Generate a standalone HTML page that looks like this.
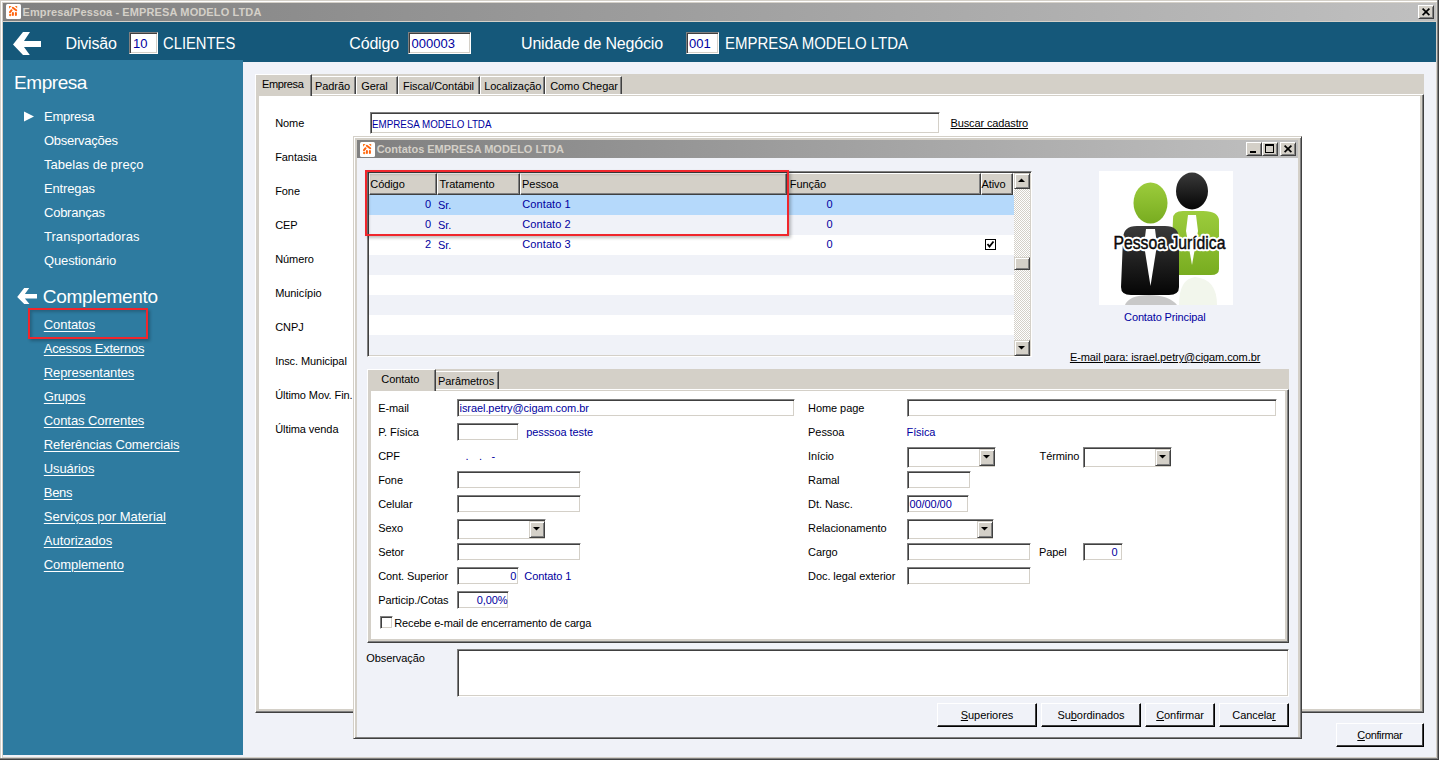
<!DOCTYPE html>
<html><head><meta charset="utf-8"><style>
html,body{margin:0;padding:0;width:1439px;height:760px;overflow:hidden;position:relative;font-family:"Liberation Sans", sans-serif}
body>div,body>svg{position:absolute}
</style></head><body>
<div style="left:0px;top:0px;width:1439px;height:760px;background:#d4d0c8"></div>
<div style="left:1px;top:1px;width:1436px;height:1px;background:#fff"></div>
<div style="left:1px;top:1px;width:1px;height:757px;background:#fff"></div>
<div style="left:1437px;top:0px;width:1px;height:759px;background:#808080"></div>
<div style="left:1438px;top:0px;width:1px;height:760px;background:#404040"></div>
<div style="left:0px;top:758px;width:1438px;height:1px;background:#808080"></div>
<div style="left:0px;top:759px;width:1439px;height:1px;background:#404040"></div>
<div style="left:3px;top:3px;width:1433px;height:18px;background:linear-gradient(to right,#808080,#c0c0c0)"></div>
<svg style="left:6px;top:4px" width="15" height="15"><rect x="0" y="0" width="15" height="15" rx="1.5" fill="#fff"/><g fill="#ff7a20"><path d="M3 2H5.6L3 4.8Z"/><path d="M8.8 2H11.2V4.6Z"/><circle cx="4.2" cy="11" r="1.2"/></g><g stroke="#ff6410" stroke-width="2" stroke-linecap="round"><path d="M6.8 3.8L10.2 6.3M4 8.2L5.6 6.2M6.9 9V11M9.9 9V11"/></g></svg>
<div style="left:22.50px;top:7px;font-size:11px;line-height:11px;color:#d4d0c8;font-weight:700;letter-spacing:0.119px;white-space:pre;">Empresa/Pessoa - EMPRESA MODELO LTDA</div>
<div style="left:1418px;top:5px;width:16px;height:14px;background:#d4d0c8;border-style:solid;border-width:1px;border-color:#fff #404040 #404040 #fff;box-shadow:inset 1px 1px 0 #d4d0c8,inset -1px -1px 0 #808080;box-sizing:border-box"></div>
<svg style="left:1422px;top:8px" width="9" height="8"><path d="M0.6 0.6L7.4 7.2M7.4 0.6L0.6 7.2" stroke="#000" stroke-width="1.7"/></svg>
<div style="left:3px;top:22px;width:1433px;height:40px;background:#15587a"></div>
<svg style="left:13px;top:32px" width="29" height="24"><path d="M10 0H17L11 9H28V15H11L16.8 23H10L0 12.5Z" fill="#fff"/></svg>
<div style="left:65.50px;top:36px;font-size:16px;line-height:16px;color:#fff;font-weight:400;letter-spacing:-0.167px;white-space:pre;">Divisão</div>
<div style="left:129px;top:32px;width:29px;height:22px;background:#fff;border-style:solid;border-width:1px;border-color:#808080 #fff #fff #808080;box-shadow:inset 1px 1px 0 #404040,inset -1px -1px 0 #d4d0c8;box-sizing:border-box"></div>
<div style="left:133.00px;top:37px;font-size:13px;line-height:13px;color:#0000a0;font-weight:400;letter-spacing:0.000px;white-space:pre;">10</div>
<div style="left:163.00px;top:36px;font-size:16px;line-height:16px;color:#fff;font-weight:400;white-space:pre;transform:scaleX(0.9227);transform-origin:0.5px 0;">CLIENTES</div>
<div style="left:349.25px;top:36px;font-size:16px;line-height:16px;color:#fff;font-weight:400;letter-spacing:-0.159px;white-space:pre;">Código</div>
<div style="left:408px;top:32px;width:63px;height:22px;background:#fff;border-style:solid;border-width:1px;border-color:#808080 #fff #fff #808080;box-shadow:inset 1px 1px 0 #404040,inset -1px -1px 0 #d4d0c8;box-sizing:border-box"></div>
<div style="left:411.50px;top:37px;font-size:13px;line-height:13px;color:#0000a0;font-weight:400;letter-spacing:0.000px;white-space:pre;">000003</div>
<div style="left:521.00px;top:36px;font-size:16px;line-height:16px;color:#fff;font-weight:400;letter-spacing:-0.167px;white-space:pre;">Unidade de Negócio</div>
<div style="left:686px;top:32px;width:33px;height:22px;background:#fff;border-style:solid;border-width:1px;border-color:#808080 #fff #fff #808080;box-shadow:inset 1px 1px 0 #404040,inset -1px -1px 0 #d4d0c8;box-sizing:border-box"></div>
<div style="left:689.00px;top:37px;font-size:13px;line-height:13px;color:#0000a0;font-weight:400;letter-spacing:0.000px;white-space:pre;">001</div>
<div style="left:724.50px;top:36px;font-size:16px;line-height:16px;color:#fff;font-weight:400;white-space:pre;transform:scaleX(0.9370);transform-origin:0.5px 0;">EMPRESA MODELO LTDA</div>
<div style="left:3px;top:62px;width:1433px;height:695px;background:#f0f2f8"></div>
<div style="left:3px;top:60px;width:240px;height:695px;background:#2e7ba0"></div>
<div style="left:14.00px;top:73px;font-size:19px;line-height:19px;color:#fff;font-weight:400;letter-spacing:-0.433px;white-space:pre;">Empresa</div>
<svg style="left:24px;top:111px" width="11" height="11"><path d="M0 0.5L10 5.5L0 10.5Z" fill="#fff"/></svg>
<div style="left:44.00px;top:110px;font-size:13px;line-height:13px;color:#fff;font-weight:400;letter-spacing:-0.262px;white-space:pre;">Empresa</div>
<div style="left:44.00px;top:134px;font-size:13px;line-height:13px;color:#fff;font-weight:400;letter-spacing:-0.263px;white-space:pre;">Observações</div>
<div style="left:44.00px;top:158px;font-size:13px;line-height:13px;color:#fff;font-weight:400;letter-spacing:0.030px;white-space:pre;">Tabelas de preço</div>
<div style="left:44.00px;top:182px;font-size:13px;line-height:13px;color:#fff;font-weight:400;letter-spacing:-0.143px;white-space:pre;">Entregas</div>
<div style="left:44.00px;top:206px;font-size:13px;line-height:13px;color:#fff;font-weight:400;letter-spacing:-0.242px;white-space:pre;">Cobranças</div>
<div style="left:44.00px;top:230px;font-size:13px;line-height:13px;color:#fff;font-weight:400;letter-spacing:0.040px;white-space:pre;">Transportadoras</div>
<div style="left:44.00px;top:254px;font-size:13px;line-height:13px;color:#fff;font-weight:400;letter-spacing:-0.127px;white-space:pre;">Questionário</div>
<svg style="left:17px;top:288px" width="21" height="17"><path d="M7.2 0H12.2L7.9 6H20V10.5H7.9L12.4 16H7.2L0.2 9Z" fill="#fff"/></svg>
<div style="left:42.80px;top:287px;font-size:19px;line-height:19px;color:#fff;font-weight:400;letter-spacing:-0.298px;white-space:pre;">Complemento</div>
<div style="left:43.80px;top:318px;font-size:13px;line-height:13px;color:#fff;font-weight:400;letter-spacing:-0.081px;white-space:pre;text-decoration:underline;text-underline-offset:2px">Contatos</div>
<div style="left:43.80px;top:342px;font-size:13px;line-height:13px;color:#fff;font-weight:400;letter-spacing:-0.228px;white-space:pre;text-decoration:underline;text-underline-offset:2px">Acessos Externos</div>
<div style="left:43.80px;top:366px;font-size:13px;line-height:13px;color:#fff;font-weight:400;letter-spacing:-0.099px;white-space:pre;text-decoration:underline;text-underline-offset:2px">Representantes</div>
<div style="left:43.80px;top:390px;font-size:13px;line-height:13px;color:#fff;font-weight:400;letter-spacing:-0.207px;white-space:pre;text-decoration:underline;text-underline-offset:2px">Grupos</div>
<div style="left:43.80px;top:414px;font-size:13px;line-height:13px;color:#fff;font-weight:400;letter-spacing:-0.093px;white-space:pre;text-decoration:underline;text-underline-offset:2px">Contas Correntes</div>
<div style="left:43.80px;top:438px;font-size:13px;line-height:13px;color:#fff;font-weight:400;letter-spacing:-0.109px;white-space:pre;text-decoration:underline;text-underline-offset:2px">Referências Comerciais</div>
<div style="left:43.80px;top:462px;font-size:13px;line-height:13px;color:#fff;font-weight:400;letter-spacing:-0.100px;white-space:pre;text-decoration:underline;text-underline-offset:2px">Usuários</div>
<div style="left:43.80px;top:486px;font-size:13px;line-height:13px;color:#fff;font-weight:400;letter-spacing:-0.310px;white-space:pre;text-decoration:underline;text-underline-offset:2px">Bens</div>
<div style="left:43.80px;top:510px;font-size:13px;line-height:13px;color:#fff;font-weight:400;letter-spacing:-0.000px;white-space:pre;text-decoration:underline;text-underline-offset:2px">Serviços por Material</div>
<div style="left:43.80px;top:534px;font-size:13px;line-height:13px;color:#fff;font-weight:400;letter-spacing:-0.032px;white-space:pre;text-decoration:underline;text-underline-offset:2px">Autorizados</div>
<div style="left:43.80px;top:558px;font-size:13px;line-height:13px;color:#fff;font-weight:400;letter-spacing:-0.085px;white-space:pre;text-decoration:underline;text-underline-offset:2px">Complemento</div>
<div style="left:28px;top:308px;width:120px;height:31px;border:2px solid #f0262c;box-sizing:border-box;box-shadow:2px 2px 3px rgba(0,0,0,.25),inset 2px 2px 3px rgba(0,0,0,.2)"></div>
<div style="left:255px;top:74px;width:1169px;height:20px;background:#d4d0c8"></div>
<div style="left:255px;top:94px;width:1169px;height:619px;background:#d4d0c8;border-style:solid;border-width:1px;border-color:#fff #404040 #404040 #fff;box-shadow:inset -1px -1px 0 #808080;box-sizing:border-box"></div>
<div style="left:259px;top:96px;width:1161px;height:613px;background:#fff"></div>
<div style="left:312px;top:76px;width:44px;height:18px;background:#d4d0c8;border-top:1px solid #fff;border-right:1px solid #404040;box-shadow:inset -1px 0 0 #808080;box-sizing:border-box"></div>
<div style="left:315.00px;top:81px;font-size:11px;line-height:11px;color:#000;font-weight:400;letter-spacing:-0.080px;white-space:pre;">Padrão</div>
<div style="left:356px;top:76px;width:42px;height:18px;background:#d4d0c8;border-top:1px solid #fff;border-left:1px solid #fff;border-right:1px solid #404040;box-shadow:inset -1px 0 0 #808080;box-sizing:border-box"></div>
<div style="left:361.20px;top:81px;font-size:11px;line-height:11px;color:#000;font-weight:400;letter-spacing:-0.080px;white-space:pre;">Geral</div>
<div style="left:398px;top:76px;width:82px;height:18px;background:#d4d0c8;border-top:1px solid #fff;border-left:1px solid #fff;border-right:1px solid #404040;box-shadow:inset -1px 0 0 #808080;box-sizing:border-box"></div>
<div style="left:403.00px;top:81px;font-size:11px;line-height:11px;color:#000;font-weight:400;letter-spacing:-0.080px;white-space:pre;">Fiscal/Contábil</div>
<div style="left:480px;top:76px;width:65px;height:18px;background:#d4d0c8;border-top:1px solid #fff;border-left:1px solid #fff;border-right:1px solid #404040;box-shadow:inset -1px 0 0 #808080;box-sizing:border-box"></div>
<div style="left:484.20px;top:81px;font-size:11px;line-height:11px;color:#000;font-weight:400;letter-spacing:-0.080px;white-space:pre;">Localização</div>
<div style="left:545px;top:76px;width:77px;height:18px;background:#d4d0c8;border-top:1px solid #fff;border-left:1px solid #fff;border-right:1px solid #404040;box-shadow:inset -1px 0 0 #808080;box-sizing:border-box"></div>
<div style="left:550.20px;top:81px;font-size:11px;line-height:11px;color:#000;font-weight:400;letter-spacing:-0.080px;white-space:pre;">Como Chegar</div>
<div style="left:255px;top:74px;width:57px;height:22px;background:#d4d0c8;border-top:1px solid #fff;border-left:1px solid #fff;border-right:1px solid #404040;box-shadow:inset -1px 0 0 #808080;box-sizing:border-box"></div>
<div style="left:262.00px;top:79px;font-size:11px;line-height:11px;color:#000;font-weight:400;letter-spacing:-0.362px;white-space:pre;">Empresa</div>
<div style="left:275.20px;top:118px;font-size:11px;line-height:11px;color:#000;font-weight:400;letter-spacing:-0.080px;white-space:pre;">Nome</div>
<div style="left:275.20px;top:152px;font-size:11px;line-height:11px;color:#000;font-weight:400;letter-spacing:-0.080px;white-space:pre;">Fantasia</div>
<div style="left:275.20px;top:186px;font-size:11px;line-height:11px;color:#000;font-weight:400;letter-spacing:-0.080px;white-space:pre;">Fone</div>
<div style="left:275.20px;top:220px;font-size:11px;line-height:11px;color:#000;font-weight:400;letter-spacing:-0.080px;white-space:pre;">CEP</div>
<div style="left:275.20px;top:254px;font-size:11px;line-height:11px;color:#000;font-weight:400;letter-spacing:-0.080px;white-space:pre;">Número</div>
<div style="left:275.20px;top:288px;font-size:11px;line-height:11px;color:#000;font-weight:400;letter-spacing:-0.080px;white-space:pre;">Município</div>
<div style="left:275.20px;top:322px;font-size:11px;line-height:11px;color:#000;font-weight:400;letter-spacing:-0.080px;white-space:pre;">CNPJ</div>
<div style="left:275.20px;top:356px;font-size:11px;line-height:11px;color:#000;font-weight:400;letter-spacing:-0.080px;white-space:pre;">Insc. Municipal</div>
<div style="left:275.20px;top:390px;font-size:11px;line-height:11px;color:#000;font-weight:400;letter-spacing:-0.080px;white-space:pre;">Último Mov. Fin.</div>
<div style="left:275.20px;top:424px;font-size:11px;line-height:11px;color:#000;font-weight:400;letter-spacing:-0.080px;white-space:pre;">Última venda</div>
<div style="left:370px;top:112px;width:570px;height:22px;background:#fff;border-style:solid;border-width:1px;border-color:#808080 #fff #fff #808080;box-shadow:inset 1px 1px 0 #404040,inset -1px -1px 0 #d4d0c8;box-sizing:border-box"></div>
<div style="left:372.00px;top:119px;font-size:11px;line-height:11px;color:#0000a0;font-weight:400;white-space:pre;transform:scaleX(0.8892);transform-origin:0.5px 0;">EMPRESA MODELO LTDA</div>
<div style="left:950.50px;top:118px;font-size:11px;line-height:11px;color:#000;font-weight:400;letter-spacing:-0.126px;white-space:pre;text-decoration:underline;text-underline-offset:1px">Buscar cadastro</div>
<div style="left:1336px;top:723px;width:88px;height:24px;background:#f0f2f8;border-style:solid;border-width:1px;border-color:#fff #000 #000 #fff;box-shadow:inset -1px -1px 0 #404040;box-sizing:border-box"></div>
<div style="left:1357.30px;top:730px;font-size:11px;line-height:11px;color:#000;font-weight:400;letter-spacing:-0.366px;white-space:pre;"><u>C</u>onfirmar</div>
<div style="left:353px;top:136px;width:949px;height:603px;background:#d4d0c8;border-style:solid;border-width:1px;border-color:#d4d0c8 #404040 #404040 #d4d0c8;box-shadow:inset 1px 1px 0 #fff,inset -1px -1px 0 #808080;box-sizing:border-box"></div>
<div style="left:357px;top:140px;width:941px;height:18px;background:linear-gradient(to right,#808080,#c0c0c0)"></div>
<svg style="left:360px;top:142px" width="15" height="15"><rect x="0" y="0" width="15" height="15" rx="1.5" fill="#fff"/><g fill="#ff7a20"><path d="M3 2H5.6L3 4.8Z"/><path d="M8.8 2H11.2V4.6Z"/><circle cx="4.2" cy="11" r="1.2"/></g><g stroke="#ff6410" stroke-width="2" stroke-linecap="round"><path d="M6.8 3.8L10.2 6.3M4 8.2L5.6 6.2M6.9 9V11M9.9 9V11"/></g></svg>
<div style="left:376.70px;top:144px;font-size:11px;line-height:11px;color:#d4d0c8;font-weight:700;letter-spacing:-0.015px;white-space:pre;">Contatos EMPRESA MODELO LTDA</div>
<div style="left:1246px;top:142px;width:16px;height:14px;background:#d4d0c8;border-style:solid;border-width:1px;border-color:#fff #404040 #404040 #fff;box-shadow:inset 1px 1px 0 #d4d0c8,inset -1px -1px 0 #808080;box-sizing:border-box"></div>
<div style="left:1262px;top:142px;width:16px;height:14px;background:#d4d0c8;border-style:solid;border-width:1px;border-color:#fff #404040 #404040 #fff;box-shadow:inset 1px 1px 0 #d4d0c8,inset -1px -1px 0 #808080;box-sizing:border-box"></div>
<div style="left:1280px;top:142px;width:16px;height:14px;background:#d4d0c8;border-style:solid;border-width:1px;border-color:#fff #404040 #404040 #fff;box-shadow:inset 1px 1px 0 #d4d0c8,inset -1px -1px 0 #808080;box-sizing:border-box"></div>
<div style="left:1250px;top:151px;width:6px;height:2px;background:#000"></div>
<div style="left:1265px;top:144px;width:9px;height:9px;border:1px solid #000;border-top-width:2px;box-sizing:border-box"></div>
<svg style="left:1284px;top:145px" width="9" height="8"><path d="M0.6 0.6L7.4 7.2M7.4 0.6L0.6 7.2" stroke="#000" stroke-width="1.7"/></svg>
<div style="left:357px;top:158px;width:941px;height:579px;background:#f0f2f8"></div>
<div style="left:367px;top:171px;width:665px;height:186px;background:#fff;border-style:solid;border-width:1px;border-color:#808080 #fff #fff #808080;box-shadow:inset 1px 1px 0 #404040,inset -1px -1px 0 #d4d0c8;box-sizing:border-box"></div>
<div style="left:369px;top:195px;width:645px;height:20px;background:#b5d9fb"></div>
<div style="left:369px;top:215px;width:645px;height:20px;background:#f0f2f8"></div>
<div style="left:369px;top:235px;width:645px;height:20px;background:#fff"></div>
<div style="left:369px;top:255px;width:645px;height:20px;background:#f0f2f8"></div>
<div style="left:369px;top:275px;width:645px;height:20px;background:#fff"></div>
<div style="left:369px;top:295px;width:645px;height:20px;background:#f0f2f8"></div>
<div style="left:369px;top:315px;width:645px;height:20px;background:#fff"></div>
<div style="left:369px;top:335px;width:645px;height:20px;background:#f0f2f8"></div>
<div style="left:369px;top:173px;width:68px;height:22px;background:#d4d0c8;border-style:solid;border-width:1px;border-color:#fff #404040 #404040 #fff;box-shadow:inset -1px -1px 0 #808080;box-sizing:border-box"></div>
<div style="left:370.30px;top:179px;font-size:11px;line-height:11px;color:#000;font-weight:400;letter-spacing:-0.080px;white-space:pre;">Código</div>
<div style="left:437px;top:173px;width:83px;height:22px;background:#d4d0c8;border-style:solid;border-width:1px;border-color:#fff #404040 #404040 #fff;box-shadow:inset -1px -1px 0 #808080;box-sizing:border-box"></div>
<div style="left:439.40px;top:179px;font-size:11px;line-height:11px;color:#000;font-weight:400;letter-spacing:-0.080px;white-space:pre;">Tratamento</div>
<div style="left:520px;top:173px;width:267px;height:22px;background:#d4d0c8;border-style:solid;border-width:1px;border-color:#fff #404040 #404040 #fff;box-shadow:inset -1px -1px 0 #808080;box-sizing:border-box"></div>
<div style="left:522.10px;top:179px;font-size:11px;line-height:11px;color:#000;font-weight:400;letter-spacing:-0.080px;white-space:pre;">Pessoa</div>
<div style="left:787px;top:173px;width:194px;height:22px;background:#d4d0c8;border-style:solid;border-width:1px;border-color:#fff #404040 #404040 #fff;box-shadow:inset -1px -1px 0 #808080;box-sizing:border-box"></div>
<div style="left:789.80px;top:179px;font-size:11px;line-height:11px;color:#000;font-weight:400;letter-spacing:-0.080px;white-space:pre;">Função</div>
<div style="left:981px;top:173px;width:32px;height:22px;background:#d4d0c8;border-style:solid;border-width:1px;border-color:#fff #404040 #404040 #fff;box-shadow:inset -1px -1px 0 #808080;box-sizing:border-box"></div>
<div style="left:981.50px;top:179px;font-size:11px;line-height:11px;color:#000;font-weight:400;letter-spacing:-0.080px;white-space:pre;">Ativo</div>
<div style="left:424.95px;top:199px;font-size:11px;line-height:11px;color:#0000a0;font-weight:400;letter-spacing:-0.080px;white-space:pre;">0</div>
<div style="left:438.00px;top:200px;font-size:11px;line-height:11px;color:#0000a0;font-weight:400;letter-spacing:-0.080px;white-space:pre;">Sr.</div>
<div style="left:522.30px;top:199px;font-size:11px;line-height:11px;color:#0000a0;font-weight:400;letter-spacing:0.089px;white-space:pre;">Contato 1</div>
<div style="left:826.50px;top:199px;font-size:11px;line-height:11px;color:#0000a0;font-weight:400;letter-spacing:-0.080px;white-space:pre;">0</div>
<div style="left:424.95px;top:219px;font-size:11px;line-height:11px;color:#0000a0;font-weight:400;letter-spacing:-0.080px;white-space:pre;">0</div>
<div style="left:438.00px;top:220px;font-size:11px;line-height:11px;color:#0000a0;font-weight:400;letter-spacing:-0.080px;white-space:pre;">Sr.</div>
<div style="left:522.30px;top:219px;font-size:11px;line-height:11px;color:#0000a0;font-weight:400;letter-spacing:0.089px;white-space:pre;">Contato 2</div>
<div style="left:826.50px;top:219px;font-size:11px;line-height:11px;color:#0000a0;font-weight:400;letter-spacing:-0.080px;white-space:pre;">0</div>
<div style="left:424.95px;top:239px;font-size:11px;line-height:11px;color:#0000a0;font-weight:400;letter-spacing:-0.080px;white-space:pre;">2</div>
<div style="left:438.00px;top:240px;font-size:11px;line-height:11px;color:#0000a0;font-weight:400;letter-spacing:-0.080px;white-space:pre;">Sr.</div>
<div style="left:522.30px;top:239px;font-size:11px;line-height:11px;color:#0000a0;font-weight:400;letter-spacing:0.089px;white-space:pre;">Contato 3</div>
<div style="left:826.50px;top:239px;font-size:11px;line-height:11px;color:#0000a0;font-weight:400;letter-spacing:-0.080px;white-space:pre;">0</div>
<svg style="left:985px;top:239px" width="11" height="11"><rect x="0.5" y="0.5" width="10" height="10" fill="#fff" stroke="#000"/><path d="M2.5 5L4.5 7.5L8.5 2.5" stroke="#000" stroke-width="1.8" fill="none"/></svg>
<div style="left:1014px;top:173px;width:16px;height:183px;background:repeating-conic-gradient(#d4d0c8 0 25%,#fff 0 50%) 0 0/2px 2px"></div>
<div style="left:1014px;top:173px;width:16px;height:16px;background:#d4d0c8;border-style:solid;border-width:1px;border-color:#d4d0c8 #404040 #404040 #d4d0c8;box-shadow:inset 1px 1px 0 #fff,inset -1px -1px 0 #808080;box-sizing:border-box"></div>
<svg style="left:1018px;top:178px" width="8" height="5"><path d="M0 4H7L3.5 0.5Z" fill="#000"/></svg>
<div style="left:1014px;top:257px;width:16px;height:13px;background:#d4d0c8;border-style:solid;border-width:1px;border-color:#d4d0c8 #404040 #404040 #d4d0c8;box-shadow:inset 1px 1px 0 #fff,inset -1px -1px 0 #808080;box-sizing:border-box"></div>
<div style="left:1014px;top:340px;width:16px;height:16px;background:#d4d0c8;border-style:solid;border-width:1px;border-color:#d4d0c8 #404040 #404040 #d4d0c8;box-shadow:inset 1px 1px 0 #fff,inset -1px -1px 0 #808080;box-sizing:border-box"></div>
<svg style="left:1018px;top:346px" width="8" height="5"><path d="M0 0H7L3.5 3.5Z" fill="#000"/></svg>
<div style="left:365px;top:170px;width:424px;height:66px;border:2px solid #f0262c;box-sizing:border-box;box-shadow:2px 2px 3px rgba(0,0,0,.25),inset 2px 2px 3px rgba(0,0,0,.2)"></div>
<svg style="left:1099px;top:171px" width="134" height="134" viewBox="0 0 134 134">
<rect width="134" height="134" fill="#fff"/>
<defs><linearGradient id="gr" x1="0" y1="0" x2="0" y2="1"><stop offset="0" stop-color="#9ccc3c"/><stop offset="1" stop-color="#78ac20"/></linearGradient>
<linearGradient id="bk" x1="0" y1="0" x2="0" y2="1"><stop offset="0" stop-color="#3a3a3a"/><stop offset="1" stop-color="#050505"/></linearGradient></defs>
<ellipse cx="93" cy="20" rx="16" ry="18.5" fill="url(#bk)"/>
<path d="M74 48Q74 40 84 40H104Q120 40 120 50V98Q120 104 112 104H80Q72 104 72 96Z" fill="url(#gr)"/>
<path d="M89 44H97L99 60L93 94L87 60Z" fill="#fff"/>
<ellipse cx="51.5" cy="32" rx="17" ry="20.5" fill="url(#gr)"/>
<path d="M24 68Q24 55 38 55H66Q80 55 80 68V116Q80 124 70 124H32Q22 124 22 116Z" fill="url(#bk)"/>
<path d="M47 58H56L58 74L51.5 115L45 74Z" fill="#fff"/>
<path d="M26 134Q30 124 50 124Q70 124 78 134Z" fill="#c8c8c8"/>
<path d="M80 134Q80 108 96 106Q118 108 118 134Z" fill="#f2f6ec"/>
<text x="14.5" y="77.5" font-family="Liberation Sans" font-weight="400" font-size="17.5" fill="none" stroke="#fff" stroke-width="4.5" stroke-linejoin="round" textLength="112" lengthAdjust="spacingAndGlyphs">Pessoa Jurídica</text><text x="14.5" y="77.5" font-family="Liberation Sans" font-weight="400" font-size="17.5" fill="#0a0a0a" stroke="#0a0a0a" stroke-width="0.45" textLength="112" lengthAdjust="spacingAndGlyphs">Pessoa Jurídica</text>
</svg>
<div style="left:1124.10px;top:312px;font-size:11px;line-height:11px;color:#0000a0;font-weight:400;letter-spacing:-0.140px;white-space:pre;">Contato Principal</div>
<div style="left:1069.90px;top:352px;font-size:11px;line-height:11px;color:#000;font-weight:400;letter-spacing:-0.077px;white-space:pre;text-decoration:underline;text-underline-offset:1px">E-mail para: israel.petry@cigam.com.br</div>
<div style="left:367px;top:369px;width:922px;height:20px;background:#d4d0c8"></div>
<div style="left:367px;top:389px;width:922px;height:254px;background:#d4d0c8;border-style:solid;border-width:1px;border-color:#fff #404040 #404040 #fff;box-shadow:inset -1px -1px 0 #808080;box-sizing:border-box"></div>
<div style="left:371px;top:391px;width:914px;height:248px;background:#fff"></div>
<div style="left:436px;top:371px;width:63px;height:18px;background:#d4d0c8;border-top:1px solid #fff;border-right:1px solid #404040;box-shadow:inset -1px 0 0 #808080;box-sizing:border-box"></div>
<div style="left:438.00px;top:376px;font-size:11px;line-height:11px;color:#000;font-weight:400;letter-spacing:-0.080px;white-space:pre;">Parâmetros</div>
<div style="left:367px;top:369px;width:69px;height:22px;background:#d4d0c8;border-top:1px solid #fff;border-left:1px solid #fff;border-right:1px solid #404040;box-shadow:inset -1px 0 0 #808080;box-sizing:border-box"></div>
<div style="left:381.30px;top:374px;font-size:11px;line-height:11px;color:#000;font-weight:400;letter-spacing:-0.080px;white-space:pre;">Contato</div>
<div style="left:378.20px;top:403px;font-size:11px;line-height:11px;color:#000;font-weight:400;letter-spacing:-0.080px;white-space:pre;">E-mail</div>
<div style="left:378.20px;top:427px;font-size:11px;line-height:11px;color:#000;font-weight:400;letter-spacing:-0.080px;white-space:pre;">P. Física</div>
<div style="left:378.20px;top:451px;font-size:11px;line-height:11px;color:#000;font-weight:400;letter-spacing:-0.080px;white-space:pre;">CPF</div>
<div style="left:378.20px;top:475px;font-size:11px;line-height:11px;color:#000;font-weight:400;letter-spacing:-0.080px;white-space:pre;">Fone</div>
<div style="left:378.20px;top:499px;font-size:11px;line-height:11px;color:#000;font-weight:400;letter-spacing:-0.080px;white-space:pre;">Celular</div>
<div style="left:378.20px;top:523px;font-size:11px;line-height:11px;color:#000;font-weight:400;letter-spacing:-0.080px;white-space:pre;">Sexo</div>
<div style="left:378.20px;top:547px;font-size:11px;line-height:11px;color:#000;font-weight:400;letter-spacing:-0.080px;white-space:pre;">Setor</div>
<div style="left:378.20px;top:571px;font-size:11px;line-height:11px;color:#000;font-weight:400;letter-spacing:-0.080px;white-space:pre;">Cont. Superior</div>
<div style="left:378.20px;top:595px;font-size:11px;line-height:11px;color:#000;font-weight:400;letter-spacing:-0.080px;white-space:pre;">Particip./Cotas</div>
<div style="left:457px;top:399px;width:338px;height:18px;background:#fff;border-style:solid;border-width:1px;border-color:#808080 #fff #fff #808080;box-shadow:inset 1px 1px 0 #404040,inset -1px -1px 0 #d4d0c8;box-sizing:border-box"></div>
<div style="left:459.50px;top:403px;font-size:11px;line-height:11px;color:#0000a0;font-weight:400;letter-spacing:-0.067px;white-space:pre;">israel.petry@cigam.com.br</div>
<div style="left:457px;top:423px;width:62px;height:18px;background:#fff;border-style:solid;border-width:1px;border-color:#808080 #fff #fff #808080;box-shadow:inset 1px 1px 0 #404040,inset -1px -1px 0 #d4d0c8;box-sizing:border-box"></div>
<div style="left:526.20px;top:427px;font-size:11px;line-height:11px;color:#0000a0;font-weight:400;letter-spacing:-0.083px;white-space:pre;">pesssoa teste</div>
<div style="left:465.50px;top:451px;font-size:11px;line-height:11px;color:#0000a0;font-weight:400;letter-spacing:-0.080px;white-space:pre;">.</div>
<div style="left:479.00px;top:451px;font-size:11px;line-height:11px;color:#0000a0;font-weight:400;letter-spacing:-0.080px;white-space:pre;">.</div>
<div style="left:491.50px;top:451px;font-size:11px;line-height:11px;color:#0000a0;font-weight:400;letter-spacing:-0.080px;white-space:pre;">-</div>
<div style="left:457px;top:471px;width:124px;height:18px;background:#fff;border-style:solid;border-width:1px;border-color:#808080 #fff #fff #808080;box-shadow:inset 1px 1px 0 #404040,inset -1px -1px 0 #d4d0c8;box-sizing:border-box"></div>
<div style="left:457px;top:495px;width:124px;height:18px;background:#fff;border-style:solid;border-width:1px;border-color:#808080 #fff #fff #808080;box-shadow:inset 1px 1px 0 #404040,inset -1px -1px 0 #d4d0c8;box-sizing:border-box"></div>
<div style="left:457px;top:519px;width:89px;height:21px;background:#fff;border-style:solid;border-width:1px;border-color:#808080 #fff #fff #808080;box-shadow:inset 1px 1px 0 #404040,inset -1px -1px 0 #d4d0c8;box-sizing:border-box"></div>
<div style="left:529px;top:521px;width:16px;height:17px;background:#d4d0c8;border-style:solid;border-width:1px;border-color:#d4d0c8 #404040 #404040 #d4d0c8;box-shadow:inset 1px 1px 0 #fff,inset -1px -1px 0 #808080;box-sizing:border-box"></div>
<svg style="left:533px;top:527px" width="8" height="5"><path d="M0 0H7L3.5 3.5Z" fill="#000"/></svg>
<div style="left:457px;top:543px;width:124px;height:18px;background:#fff;border-style:solid;border-width:1px;border-color:#808080 #fff #fff #808080;box-shadow:inset 1px 1px 0 #404040,inset -1px -1px 0 #d4d0c8;box-sizing:border-box"></div>
<div style="left:457px;top:567px;width:62px;height:18px;background:#fff;border-style:solid;border-width:1px;border-color:#808080 #fff #fff #808080;box-shadow:inset 1px 1px 0 #404040,inset -1px -1px 0 #d4d0c8;box-sizing:border-box"></div>
<div style="left:510.16px;top:571px;font-size:11px;line-height:11px;color:#0000a0;font-weight:400;letter-spacing:-0.080px;white-space:pre;">0</div>
<div style="left:524.30px;top:571px;font-size:11px;line-height:11px;color:#0000a0;font-weight:400;letter-spacing:-0.080px;white-space:pre;">Contato 1</div>
<div style="left:457px;top:591px;width:52px;height:18px;background:#fff;border-style:solid;border-width:1px;border-color:#808080 #fff #fff #808080;box-shadow:inset 1px 1px 0 #404040,inset -1px -1px 0 #d4d0c8;box-sizing:border-box"></div>
<div style="left:476.70px;top:595px;font-size:11px;line-height:11px;color:#0000a0;font-weight:400;letter-spacing:-0.080px;white-space:pre;">0,00%</div>
<div style="left:380px;top:616px;width:13px;height:13px;background:#fff;border-style:solid;border-width:1px;border-color:#808080 #fff #fff #808080;box-shadow:inset 1px 1px 0 #404040,inset -1px -1px 0 #d4d0c8;box-sizing:border-box"></div>
<div style="left:394.30px;top:618px;font-size:11px;line-height:11px;color:#000;font-weight:400;letter-spacing:-0.158px;white-space:pre;">Recebe e-mail de encerramento de carga</div>
<div style="left:808.10px;top:403px;font-size:11px;line-height:11px;color:#000;font-weight:400;letter-spacing:-0.080px;white-space:pre;">Home page</div>
<div style="left:808.10px;top:427px;font-size:11px;line-height:11px;color:#000;font-weight:400;letter-spacing:-0.080px;white-space:pre;">Pessoa</div>
<div style="left:808.10px;top:451px;font-size:11px;line-height:11px;color:#000;font-weight:400;letter-spacing:-0.080px;white-space:pre;">Início</div>
<div style="left:808.10px;top:475px;font-size:11px;line-height:11px;color:#000;font-weight:400;letter-spacing:-0.080px;white-space:pre;">Ramal</div>
<div style="left:808.10px;top:499px;font-size:11px;line-height:11px;color:#000;font-weight:400;letter-spacing:-0.080px;white-space:pre;">Dt. Nasc.</div>
<div style="left:808.10px;top:523px;font-size:11px;line-height:11px;color:#000;font-weight:400;letter-spacing:-0.080px;white-space:pre;">Relacionamento</div>
<div style="left:808.10px;top:547px;font-size:11px;line-height:11px;color:#000;font-weight:400;letter-spacing:-0.080px;white-space:pre;">Cargo</div>
<div style="left:808.10px;top:571px;font-size:11px;line-height:11px;color:#000;font-weight:400;letter-spacing:-0.080px;white-space:pre;">Doc. legal exterior</div>
<div style="left:907px;top:399px;width:370px;height:18px;background:#fff;border-style:solid;border-width:1px;border-color:#808080 #fff #fff #808080;box-shadow:inset 1px 1px 0 #404040,inset -1px -1px 0 #d4d0c8;box-sizing:border-box"></div>
<div style="left:906.50px;top:427px;font-size:11px;line-height:11px;color:#0000a0;font-weight:400;letter-spacing:-0.080px;white-space:pre;">Física</div>
<div style="left:907px;top:447px;width:89px;height:21px;background:#fff;border-style:solid;border-width:1px;border-color:#808080 #fff #fff #808080;box-shadow:inset 1px 1px 0 #404040,inset -1px -1px 0 #d4d0c8;box-sizing:border-box"></div>
<div style="left:979px;top:449px;width:16px;height:17px;background:#d4d0c8;border-style:solid;border-width:1px;border-color:#d4d0c8 #404040 #404040 #d4d0c8;box-shadow:inset 1px 1px 0 #fff,inset -1px -1px 0 #808080;box-sizing:border-box"></div>
<svg style="left:983px;top:455px" width="8" height="5"><path d="M0 0H7L3.5 3.5Z" fill="#000"/></svg>
<div style="left:1039.50px;top:451px;font-size:11px;line-height:11px;color:#000;font-weight:400;letter-spacing:-0.080px;white-space:pre;">Término</div>
<div style="left:1083px;top:447px;width:89px;height:21px;background:#fff;border-style:solid;border-width:1px;border-color:#808080 #fff #fff #808080;box-shadow:inset 1px 1px 0 #404040,inset -1px -1px 0 #d4d0c8;box-sizing:border-box"></div>
<div style="left:1155px;top:449px;width:16px;height:17px;background:#d4d0c8;border-style:solid;border-width:1px;border-color:#d4d0c8 #404040 #404040 #d4d0c8;box-shadow:inset 1px 1px 0 #fff,inset -1px -1px 0 #808080;box-sizing:border-box"></div>
<svg style="left:1159px;top:455px" width="8" height="5"><path d="M0 0H7L3.5 3.5Z" fill="#000"/></svg>
<div style="left:907px;top:471px;width:64px;height:18px;background:#fff;border-style:solid;border-width:1px;border-color:#808080 #fff #fff #808080;box-shadow:inset 1px 1px 0 #404040,inset -1px -1px 0 #d4d0c8;box-sizing:border-box"></div>
<div style="left:907px;top:495px;width:62px;height:18px;background:#fff;border-style:solid;border-width:1px;border-color:#808080 #fff #fff #808080;box-shadow:inset 1px 1px 0 #404040,inset -1px -1px 0 #d4d0c8;box-sizing:border-box"></div>
<div style="left:909.50px;top:499px;font-size:11px;line-height:11px;color:#0000a0;font-weight:400;letter-spacing:-0.080px;white-space:pre;">00/00/00</div>
<div style="left:907px;top:519px;width:87px;height:21px;background:#fff;border-style:solid;border-width:1px;border-color:#808080 #fff #fff #808080;box-shadow:inset 1px 1px 0 #404040,inset -1px -1px 0 #d4d0c8;box-sizing:border-box"></div>
<div style="left:977px;top:521px;width:16px;height:17px;background:#d4d0c8;border-style:solid;border-width:1px;border-color:#d4d0c8 #404040 #404040 #d4d0c8;box-shadow:inset 1px 1px 0 #fff,inset -1px -1px 0 #808080;box-sizing:border-box"></div>
<svg style="left:981px;top:527px" width="8" height="5"><path d="M0 0H7L3.5 3.5Z" fill="#000"/></svg>
<div style="left:907px;top:543px;width:124px;height:18px;background:#fff;border-style:solid;border-width:1px;border-color:#808080 #fff #fff #808080;box-shadow:inset 1px 1px 0 #404040,inset -1px -1px 0 #d4d0c8;box-sizing:border-box"></div>
<div style="left:1038.90px;top:547px;font-size:11px;line-height:11px;color:#000;font-weight:400;letter-spacing:-0.080px;white-space:pre;">Papel</div>
<div style="left:1083px;top:543px;width:40px;height:18px;background:#fff;border-style:solid;border-width:1px;border-color:#808080 #fff #fff #808080;box-shadow:inset 1px 1px 0 #404040,inset -1px -1px 0 #d4d0c8;box-sizing:border-box"></div>
<div style="left:1111.45px;top:547px;font-size:11px;line-height:11px;color:#0000a0;font-weight:400;letter-spacing:-0.080px;white-space:pre;">0</div>
<div style="left:907px;top:567px;width:124px;height:18px;background:#fff;border-style:solid;border-width:1px;border-color:#808080 #fff #fff #808080;box-shadow:inset 1px 1px 0 #404040,inset -1px -1px 0 #d4d0c8;box-sizing:border-box"></div>
<div style="left:366.30px;top:653px;font-size:11px;line-height:11px;color:#000;font-weight:400;letter-spacing:-0.080px;white-space:pre;">Observação</div>
<div style="left:457px;top:649px;width:832px;height:48px;background:#fff;border-style:solid;border-width:1px;border-color:#808080 #fff #fff #808080;box-shadow:inset 1px 1px 0 #404040,inset -1px -1px 0 #d4d0c8;box-sizing:border-box"></div>
<div style="left:937px;top:703px;width:100px;height:24px;background:#f0f2f8;border-style:solid;border-width:1px;border-color:#fff #000 #000 #fff;box-shadow:inset -1px -1px 0 #404040;box-sizing:border-box"></div>
<div style="left:960.80px;top:710px;font-size:11px;line-height:11px;color:#000;font-weight:400;letter-spacing:-0.080px;white-space:pre;"><u>S</u>uperiores</div>
<div style="left:1041px;top:703px;width:100px;height:24px;background:#f0f2f8;border-style:solid;border-width:1px;border-color:#fff #000 #000 #fff;box-shadow:inset -1px -1px 0 #404040;box-sizing:border-box"></div>
<div style="left:1057.52px;top:710px;font-size:11px;line-height:11px;color:#000;font-weight:400;letter-spacing:-0.080px;white-space:pre;">Su<u>b</u>ordinados</div>
<div style="left:1145px;top:703px;width:70px;height:24px;background:#f0f2f8;border-style:solid;border-width:1px;border-color:#fff #000 #000 #fff;box-shadow:inset -1px -1px 0 #404040;box-sizing:border-box"></div>
<div style="left:1156.21px;top:710px;font-size:11px;line-height:11px;color:#000;font-weight:400;letter-spacing:-0.080px;white-space:pre;"><u>C</u>onfirmar</div>
<div style="left:1219px;top:703px;width:70px;height:24px;background:#f0f2f8;border-style:solid;border-width:1px;border-color:#fff #000 #000 #fff;box-shadow:inset -1px -1px 0 #404040;box-sizing:border-box"></div>
<div style="left:1232.30px;top:710px;font-size:11px;line-height:11px;color:#000;font-weight:400;letter-spacing:-0.080px;white-space:pre;">Cancela<u>r</u></div>
</body></html>
